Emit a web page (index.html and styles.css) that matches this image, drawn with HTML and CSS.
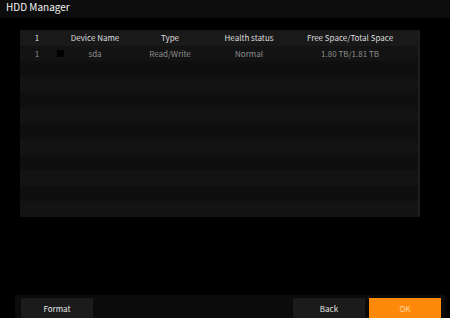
FILE: index.html
```html
<!DOCTYPE html>
<html lang="en">
<head>
    <meta charset="UTF-8">
    <title>HDD Manager</title>
    <link rel="stylesheet" href="styles.css">
</head>
<body>
    <div class="page">
        <header class="title-bar">
            <h1>HDD Manager</h1>
        </header>

        <main class="content">
            <div class="hdd-table">
                <div class="row head">
                    <span>1</span>
                    <span></span>
                    <span>Device Name</span>
                    <span>Type</span>
                    <span>Health status</span>
                    <span>Free Space/Total Space</span>
                </div>
                <div class="row">
                    <span>1</span>
                    <span><i class="check"></i></span>
                    <span>sda</span>
                    <span>Read/Write</span>
                    <span>Normal</span>
                    <span>1.80 TB/1.81 TB</span>
                </div>
                <div class="row"></div>
                <div class="row"></div>
                <div class="row"></div>
                <div class="row"></div>
                <div class="row"></div>
                <div class="row"></div>
                <div class="row"></div>
                <div class="row"></div>
                <div class="row"></div>
                <div class="row"></div>
            </div>
        </main>

        <footer class="action-bar">
            <button type="button" class="btn">Format</button>
            <div class="spacer"></div>
            <button type="button" class="btn">Back</button>
            <button type="button" class="btn primary">OK</button>
        </footer>
    </div>
</body>
</html>
```

FILE: styles.css
```css
html, body {
    margin: 0;
    padding: 0;
    background: #000;
    overflow: hidden;
}

body {
    font-family: "Noto Sans CJK SC", "Noto Sans", sans-serif;
    color: #e6e6e6;
}

.page {
    display: flex;
    flex-direction: column;
    width: 450px;
    height: 318px;
}

.title-bar {
    height: 18px;
    background: #0c0c0c;
    padding-left: 6px;
}

.title-bar h1 {
    margin: 0;
    font-size: 10px;
    font-weight: 400;
    line-height: 13px;
    color: #f2f2f2;
}

.content {
    padding: 12px 0 0 20px;
}

.hdd-table {
    display: grid;
    grid-template-rows: repeat(12, 1fr);
    width: 398px;
    height: 187px;
    border-right: 2px solid #1d1d1d;
}

.row {
    display: grid;
    grid-template-columns: 34px 12px 58px 92px 66px 136px;
    align-items: center;
    font-size: 8px;
    color: #8e8e8e;
    background: #131313;
}

.row:nth-child(odd) {
    background: #0f0f0f;
}

.row.head {
    background: #191919;
    color: #dedede;
}

.row span {
    text-align: center;
    white-space: nowrap;
}

.check {
    display: block;
    width: 7px;
    height: 7px;
    margin: 0 auto;
    background: #000;
}

.action-bar {
    display: flex;
    gap: 4px;
    margin-top: auto;
    margin-left: 15px;
    margin-right: 5px;
    height: 23px;
    padding: 3px 4px 0 6px;
    box-sizing: border-box;
    background: #0b0b0b;
}

.spacer {
    flex: 1;
}

.btn {
    width: 72px;
    height: 21px;
    border: none;
    background: #1b1b1b;
    color: #e6e6e6;
    font-family: "Noto Sans CJK SC", "Noto Sans", sans-serif;
    font-size: 8px;
    padding: 0;
}

.btn.primary {
    background: #ff8a0a;
    color: #ffd9a8;
}
```
